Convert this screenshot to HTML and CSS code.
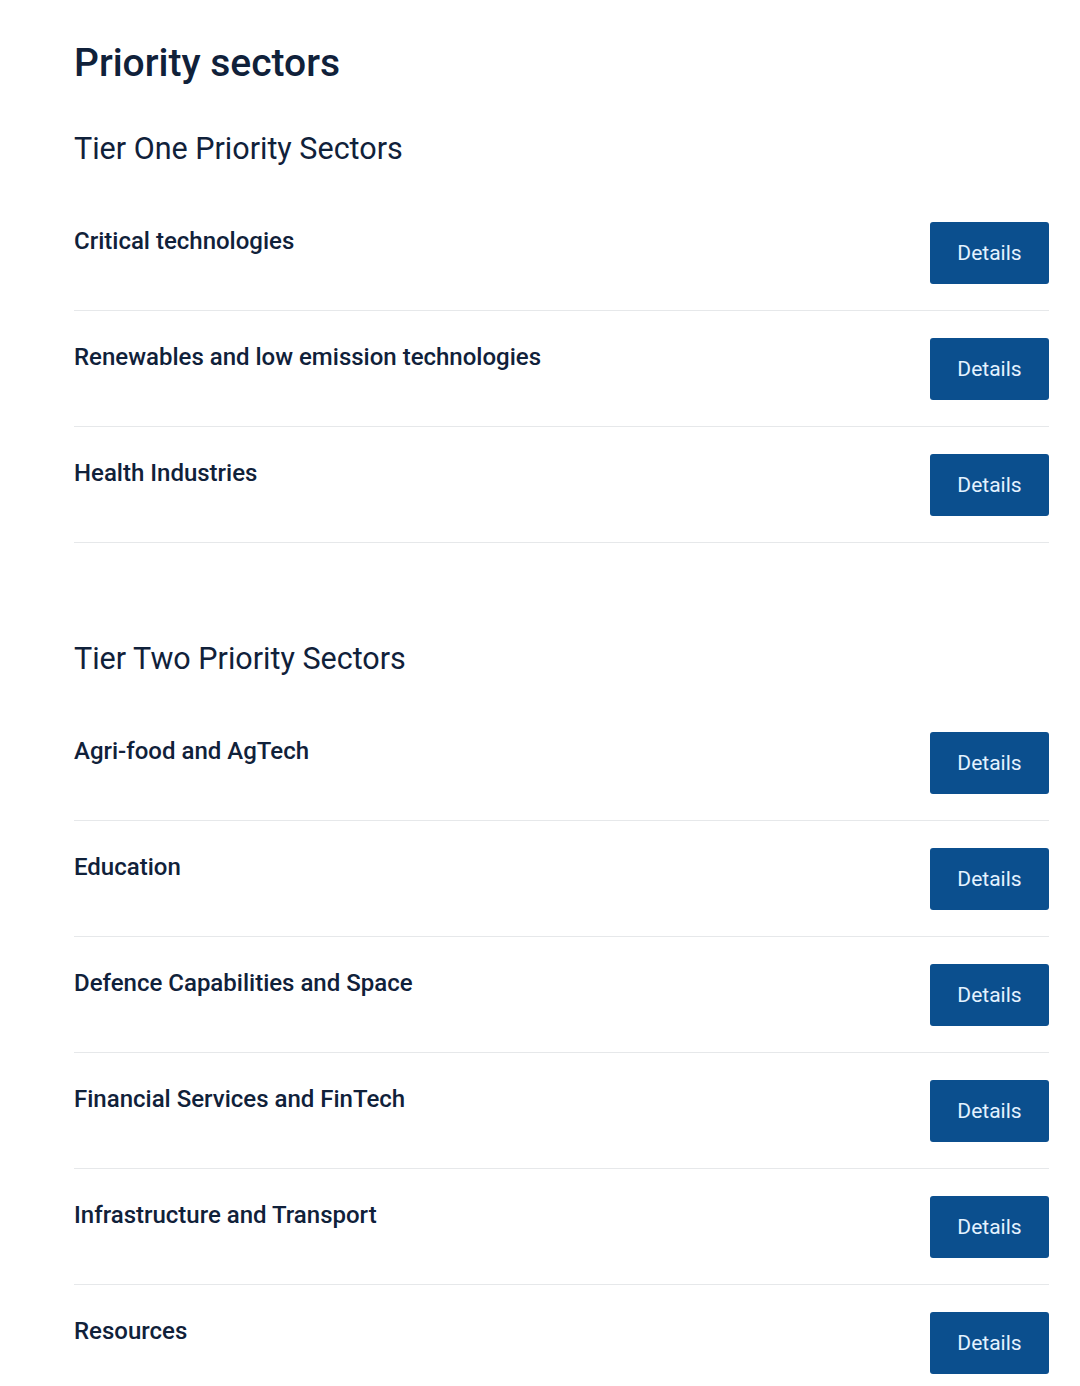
FILE: index.html
```html
<!DOCTYPE html>
<html lang="en">
<head>
<meta charset="utf-8">
<title>Priority sectors</title>
<link rel="stylesheet" href="styles.css">
</head>
<body>
<main class="page">
  <h1 class="page-title">Priority sectors</h1>

  <section class="tier">
    <h2 class="tier-title">Tier One Priority Sectors</h2>
    <ul class="sector-list">
      <li class="sector"><span class="sector-name">Critical technologies</span><a class="btn" href="#">Details</a></li>
      <li class="sector"><span class="sector-name">Renewables and low emission technologies</span><a class="btn" href="#">Details</a></li>
      <li class="sector"><span class="sector-name">Health Industries</span><a class="btn" href="#">Details</a></li>
    </ul>
  </section>

  <section class="tier tier-two">
    <h2 class="tier-title">Tier Two Priority Sectors</h2>
    <ul class="sector-list">
      <li class="sector"><span class="sector-name">Agri-food and AgTech</span><a class="btn" href="#">Details</a></li>
      <li class="sector"><span class="sector-name">Education</span><a class="btn" href="#">Details</a></li>
      <li class="sector"><span class="sector-name">Defence Capabilities and Space</span><a class="btn" href="#">Details</a></li>
      <li class="sector"><span class="sector-name">Financial Services and FinTech</span><a class="btn" href="#">Details</a></li>
      <li class="sector"><span class="sector-name">Infrastructure and Transport</span><a class="btn" href="#">Details</a></li>
      <li class="sector"><span class="sector-name">Resources</span><a class="btn" href="#">Details</a></li>
    </ul>
  </section>
</main>
</body>
</html>
```

FILE: styles.css
```css
* { box-sizing: border-box; }
html, body { margin: 0; padding: 0; background: #ffffff; }
body {
  font-family: Roboto, "Liberation Sans", Arial, sans-serif;
  color: #10213a;
}
.page {
  padding: 38px 31px 0 74px;
}
.page-title {
  margin: 0;
  font-size: 39px;
  font-weight: 500;
  line-height: 50px;
}
.tier-title {
  margin: 43px 0 0;
  font-size: 30.5px;
  font-weight: 400;
  line-height: 36px;
}
.tier-two .tier-title { margin-top: 98px; }
.sector-list {
  list-style: none;
  margin: 0;
  padding: 0;
  margin-top: 55px;
}
.sector-list .sector:first-child { padding-top: 0; }
.sector {
  display: flex;
  justify-content: space-between;
  align-items: flex-start;
  padding: 27px 0 26px;
  border-bottom: 1px solid #e6e8ea;
}
.sector-name {
  font-size: 24px;
  font-weight: 500;
  line-height: 28px;
  padding-top: 5px;
}
.btn {
  display: flex;
  align-items: center;
  justify-content: center;
  width: 119px;
  height: 62px;
  background: #0b4f8e;
  color: #e4f2ff;
  border-radius: 3px;
  font-size: 21px;
  font-weight: 400;
  text-decoration: none;
}
```
